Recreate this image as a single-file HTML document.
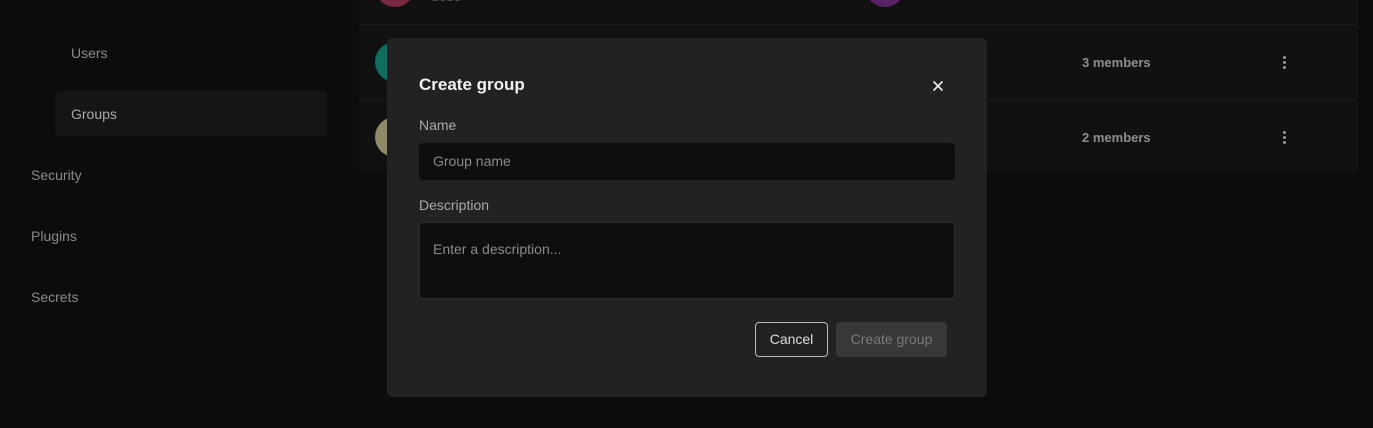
<!DOCTYPE html>
<html><head><style>
*{margin:0;padding:0;box-sizing:border-box}
body{width:1373px;height:428px;background:#0c0c0c;font-family:"Liberation Sans",sans-serif;position:relative;overflow:hidden;color:#ddd}
.a{position:absolute}
.nav{font-size:14px;color:#8a8a8a}
.card{left:359px;top:-10px;width:999px;height:183px;background:#111;border-radius:6px}
.line{left:359px;width:999px;height:1px;background:#1b1b1b}
.av{width:40px;height:40px;border-radius:50%}
.mem{font-size:13px;color:#8f8f8f;font-weight:bold}
.dots{width:3px}
.dots i{display:block;width:3px;height:3px;border-radius:50%;background:#999;margin-bottom:2px}
.modal{left:387px;top:38px;width:600px;height:359px;background:#222;border-radius:6px}
label{position:absolute;font-size:14px;color:#aaa}
.inp{background:#0e0e0e;border-radius:4px;font-size:14px;color:#8a8a8a;padding-left:14px}
</style></head><body>
<div class="a nav" style="left:71px;top:45px">Users</div>
<div class="a" style="left:55px;top:91px;width:272px;height:45px;background:#151515;border-radius:4px"></div>
<div class="a nav" style="left:71px;top:106px;color:#aaa">Groups</div>
<div class="a nav" style="left:31px;top:167px">Security</div>
<div class="a nav" style="left:31px;top:228px">Plugins</div>
<div class="a nav" style="left:31px;top:289px">Secrets</div>

<div class="a card"></div>
<div class="a line" style="top:24px"></div>
<div class="a line" style="top:99px"></div>
<div class="a av" style="left:375px;top:-33px;background:#7a2a40"></div>
<div class="a" style="left:431px;top:-12px;font-size:14px;color:#555">desc</div>
<div class="a av" style="left:865px;top:-33px;background:#5a2266"></div>
<div class="a av" style="left:375px;top:42px;background:#0f6f5e"></div>
<div class="a av" style="left:375px;top:117px;background:#8f8a6a"></div>
<div class="a mem" style="left:1082px;top:55px">3 members</div>
<div class="a mem" style="left:1082px;top:130px">2 members</div>
<div class="a dots" style="left:1283px;top:56px"><i></i><i></i><i></i></div>
<div class="a dots" style="left:1283px;top:131px"><i></i><i></i><i></i></div>

<div class="a modal"></div>
<div class="a" style="left:419px;top:75px;font-size:17px;font-weight:bold;color:#f2f2f2">Create group</div>
<svg class="a" style="left:932px;top:80px" width="12" height="12" viewBox="0 0 12 12"><path d="M1.5 1.5L10.5 10.5M10.5 1.5L1.5 10.5" stroke="#eee" stroke-width="1.6"/></svg>
<label style="left:419px;top:117px">Name</label>
<div class="a inp" style="left:419px;top:143px;width:536px;height:37px;line-height:37px">Group name</div>
<label style="left:419px;top:197px">Description</label>
<div class="a inp" style="left:419px;top:222px;width:536px;height:77px;border:1px solid #2c2c2c;padding-top:18px;padding-left:13px">Enter a description...</div>
<div class="a" style="left:755px;top:322px;width:73px;height:35px;border:1px solid #bbb;border-radius:4px;font-size:14px;color:#ddd;text-align:center;line-height:33px">Cancel</div>
<div class="a" style="left:836px;top:322px;width:111px;height:35px;background:#383838;border-radius:4px;font-size:14px;color:#7a7a7a;text-align:center;line-height:35px">Create group</div>
</body></html>
